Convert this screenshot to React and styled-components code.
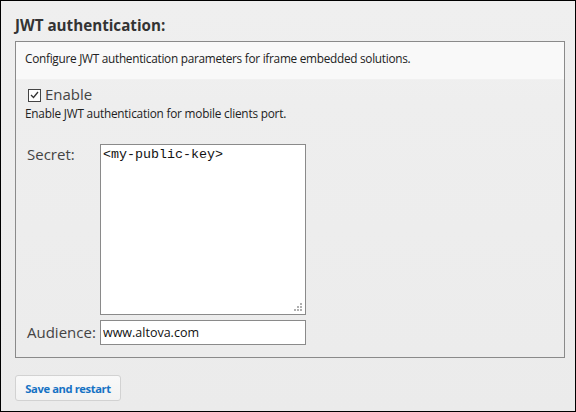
import React from 'react'
import styled, { createGlobalStyle } from 'styled-components'

const Global = createGlobalStyle`
    html, body {
        margin:0;
        padding:0;
        background:#ededed;
    }
    * { box-sizing:border-box; }
`

const Frame = styled.div`
    width:576px;
    height:412px;
    border:1px solid #000;
    background:linear-gradient(#efefef, #ebebeb);
    padding:0 11px 0 14px;
    font-family:"Open Sans", "Liberation Sans", sans-serif;
    color:#333;
`

const Title = styled.h2`
    margin:0 0 6px;
    padding-top:14px;
    font-size:15.2px;
    line-height:20px;
    font-weight:700;
    color:#333;
`

const Box = styled.div`
    border:1px solid #8a8a8a;
    width:550px;
    background:linear-gradient(#f0f0f0 0px, #eeeeee 60px, #ececec 100%);
`

const Intro = styled.div`
    height:38px;
    padding:8px 9px 0;
    font-size:11.8px;
    letter-spacing:-0.27px;
    line-height:16px;
    color:#222;
    background:#f9f9f9;
    border-bottom:1px solid #f1f1f1;
`

const Body = styled.div`
    padding:4px 9px 12px;
`

const CheckRow = styled.label`
    display:flex;
    align-items:center;
    gap:4px;
    margin-left:3px;
    height:20px;
    font-size:15px;
    line-height:20px;
    color:#444;
`

const CheckBox = styled.span`
    display:inline-flex;
    align-items:center;
    justify-content:center;
    width:13px;
    height:13px;
    border:1px solid #444;
    background:#fff;
    margin-top:2px;
`

const Note = styled.div`
    margin-top:1px;
    font-size:11.8px;
    letter-spacing:-0.21px;
    line-height:16px;
    color:#222;
`

const Form = styled.div`
    display:grid;
    grid-template-columns:73px 206px;
    row-gap:5px;
    margin:23px 0 0 2px;
`

const Label = styled.div`
    font-size:15px;
    line-height:${p => p.$tall ? '20px' : '25px'};
    color:#444;
    white-space:nowrap;
`

const AreaWrap = styled.div`
    position:relative;
    height:171px;
`

const Area = styled.textarea`
    display:block;
    width:206px;
    height:171px;
    margin:0;
    padding:2px;
    border:1px solid #8a8a8a;
    background:#fff;
    resize:none;
    font-family:"Liberation Mono", "Courier New", monospace;
    font-size:13.33px;
    color:#111;
    outline:none;
`

const Grip = styled.svg`
    position:absolute;
    right:3px;
    bottom:3px;
`

const Input = styled.input`
    display:block;
    width:206px;
    height:25px;
    margin:0;
    padding:0 2px;
    border:1px solid #8a8a8a;
    background:#fff;
    font-family:"Open Sans", "Liberation Sans", sans-serif;
    font-size:12.5px;
    color:#111;
    outline:none;
`

const Button = styled.button`
    margin-top:17px;
    width:106px;
    height:26px;
    padding:0;
    border:1px solid #d2d2d2;
    border-radius:3px;
    background:linear-gradient(#f9f9f9, #f2f2f2);
    font-family:"Open Sans", "Liberation Sans", sans-serif;
    font-size:11.2px;
    letter-spacing:-0.4px;
    font-weight:700;
    color:#1672c4;
`

export default function App() {
    return (
        <>
            <Global />
            <Frame>
                <Title>JWT authentication:</Title>
                <Box>
                    <Intro>Configure JWT authentication parameters for iframe embedded solutions.</Intro>
                    <Body>
                        <CheckRow>
                            <CheckBox>
                                <svg width="9" height="8" viewBox="0 0 9 8">
                                    <path d="M1 4 L3.5 6.5 L8 1" fill="none" stroke="#333" strokeWidth="1.3" />
                                </svg>
                            </CheckBox>
                            Enable
                        </CheckRow>
                        <Note>Enable JWT authentication for mobile clients port.</Note>
                        <Form>
                            <Label $tall>Secret:</Label>
                            <AreaWrap>
                                <Area readOnly defaultValue="<my-public-key>" />
                                <Grip width="9" height="9" viewBox="0 0 9 9">
                                    <rect x="6" y="0" width="2" height="2" fill="#b0b0b0" />
                                    <rect x="3" y="3" width="2" height="2" fill="#b0b0b0" />
                                    <rect x="6" y="3" width="2" height="2" fill="#b0b0b0" />
                                    <rect x="0" y="6" width="2" height="2" fill="#b0b0b0" />
                                    <rect x="3" y="6" width="2" height="2" fill="#b0b0b0" />
                                    <rect x="6" y="6" width="2" height="2" fill="#b0b0b0" />
                                </Grip>
                            </AreaWrap>
                            <Label>Audience:</Label>
                            <Input readOnly defaultValue="www.altova.com" />
                        </Form>
                    </Body>
                </Box>
                <Button>Save and restart</Button>
            </Frame>
        </>
    )
}
